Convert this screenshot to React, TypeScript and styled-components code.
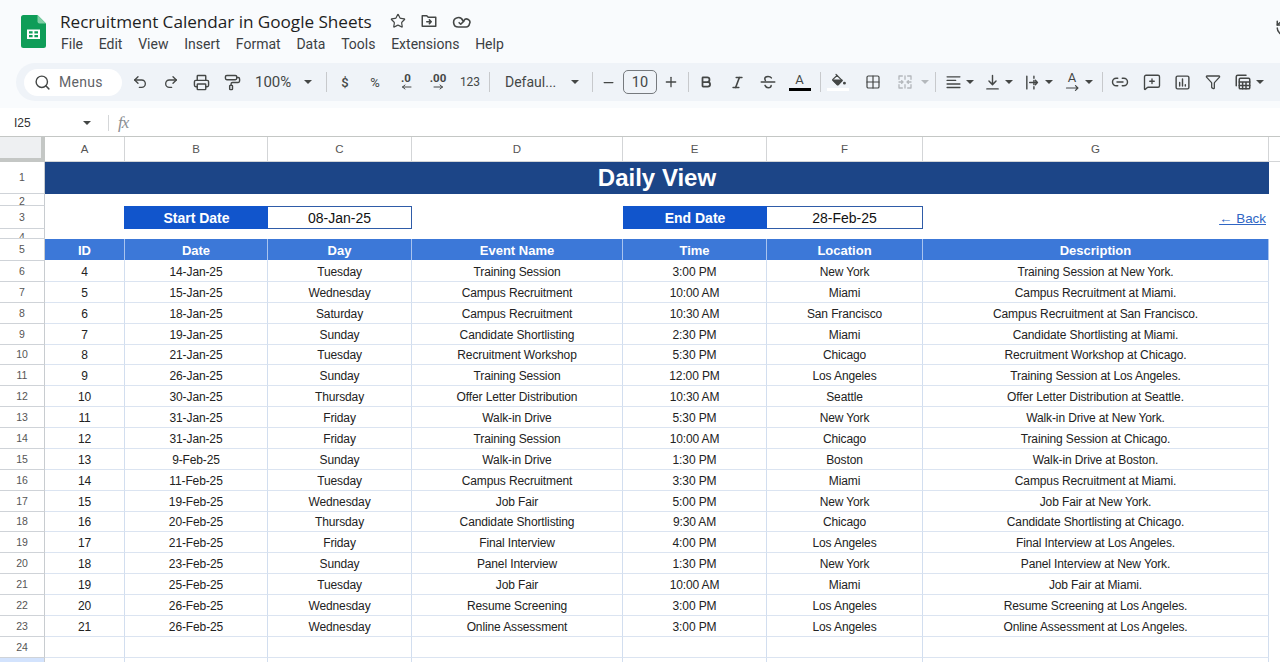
import React from "react";
import styled, { createGlobalStyle } from "styled-components";
import { Search, Undo2, Redo2, Printer, PaintRoller, Star, Minus, Plus, Grid2x2, Link2, MessageSquarePlus, Funnel, Italic, Bold } from "lucide-react";

const Global = createGlobalStyle`
  html, body { margin: 0; padding: 0; background: #fff; height: 662px; overflow: hidden; }
  * { box-sizing: border-box; }
  #root { width: 1280px; height: 662px; overflow: hidden; font-family: "Liberation Sans", Arial, sans-serif; }
`;

const Chrome = styled.div`background: #f9fbfd; height: 108px; display: flex; flex-direction: column;`;
const Header = styled.div`height: 63px; display: flex; padding: 15px 0 0 21px; position: relative; overflow: hidden;`;
const Logo = styled.svg`width: 25px; height: 33px; flex: none;`;
const TitleBlock = styled.div`margin-left: 14px; margin-top: -5px; display: flex; flex-direction: column; flex: 1;`;
const TitleRow = styled.div`display: flex; align-items: center; height: 22px;`;
const Title = styled.span`font-family: "Open Sans", Roboto, sans-serif; font-size: 17.2px; color: #1f1f1f; white-space: nowrap; width: 312px; letter-spacing: -0.05px;`;
const TitleIcon = styled.span<{ $ml: number }>`margin-left: ${p => p.$ml}px; display: flex; color: #444746;`;
const Menu = styled.div`display: flex; margin-top: 4px; margin-left: 1px; gap: 15.75px;`;
const MenuItem = styled.span`font-family: Roboto, sans-serif; font-size: 14px; color: #3c4043;`;
const HistoryMark = styled.span`position: absolute; right: -13px; top: 19px; display: flex; color: #444746;`;

const Toolbar = styled.div`margin-left: 16px; height: 38px; background: #eff3f8; border-radius: 19px 0 0 19px; display: flex; align-items: center; padding-left: 8px;`;
const SearchPill = styled.div`width: 98px; height: 27px; background: #fff; border-radius: 14px; display: flex; align-items: center; padding-left: 10px; margin-right: 2px; color: #444746;`;
const PillLabel = styled.span`font-family: Roboto, sans-serif; font-size: 14px; margin-left: 8px; color: #5f6368; letter-spacing: .3px;`;
const Slot = styled.div<{ $w: number; $faded?: boolean }>`width: ${p => p.$w}px; flex: none; height: 100%; display: flex; align-items: center; justify-content: center; color: ${p => p.$faded ? "#b4b8bc" : "#444746"};`;
const Sep = styled.div<{ $w: number }>`width: ${p => p.$w}px; flex: none; display: flex; justify-content: center; &::after { content: ""; width: 1px; height: 20px; background: #c7c9cc; }`;
const ToolText = styled.span<{ $size?: number; $weight?: number; $pad?: number }>`font-family: Roboto, sans-serif; font-size: ${p => p.$size ?? 14}px; font-weight: ${p => p.$weight ?? 400}; color: #444746; padding-left: ${p => p.$pad ?? 0}px; width: 100%; text-align: ${p => p.$pad ? "left" : "center"}; white-space: nowrap;`;
const DecBox = styled.span`display: flex; flex-direction: column; align-items: center; font-family: Roboto, sans-serif; font-size: 11.5px; font-weight: 700; line-height: 11px; color: #444746; margin-top: -2px;`;
const FontBox = styled.div`width: 34px; height: 24px; border: 1px solid #767a7e; border-radius: 5px; display: flex; align-items: center; justify-content: center; font-family: Roboto, sans-serif; font-size: 14.5px; color: #444746;`;
const ColorTool = styled.div<{ $bar: string }>`display: flex; flex-direction: column; align-items: center; width: 22px; color: #444746; &::after { content: ""; width: 22px; height: 3px; background: ${p => p.$bar}; margin-top: 1px; }`;
const ToolLetter = styled.span`font-family: Roboto, sans-serif; font-size: 13px; line-height: 14px; color: #444746;`;
const RotateStack = styled.span`display: flex; flex-direction: column; align-items: center; margin-top: -2px;`;
const Group = styled.div<{ $ml?: number }>`width: 39px; flex: none; height: 100%; display: flex; align-items: center; gap: 3px; margin-left: ${p => p.$ml ?? 0}px; color: #444746;`;
const IconBox = styled.span`width: 20px; display: flex; justify-content: center;`;
const CaretShape = styled.span<{ $faded?: boolean }>`width: 0; height: 0; flex: none; border-left: 4px solid transparent; border-right: 4px solid transparent; border-top: 4px solid ${p => p.$faded ? "#b4b8bc" : "#444746"};`;

const FormulaBar = styled.div`height: 29px; background: #fff; border-bottom: 1px solid #c4c7c5; display: flex; align-items: center; padding: 1px 0 0 14px;`;
const CellName = styled.span`font-size: 12px; color: #333; width: 69px;`;
const FxSep = styled.span`width: 1px; height: 16px; background: #d5d7d9; margin-left: 17px; margin-right: 9px;`;
const Fx = styled.span`font-family: "Liberation Serif", serif; font-style: italic; font-size: 17px; color: #8a8e92; letter-spacing: -1px;`;

const COLS = "45px 80px 143px 144px 211px 144px 156px 346px 11px";
const Row = styled.div<{ $h: number }>`display: grid; grid-template-columns: ${COLS}; height: ${p => p.$h}px;`;
const Corner = styled.div`background: #eef0f2; border-right: 4px solid #c4c7c5; border-bottom: 4px solid #c4c7c5;`;
const ColHead = styled.div<{ $tail?: boolean }>`display: flex; align-items: center; justify-content: center; font-size: 11.5px; color: #555; border-right: ${p => p.$tail ? "none" : "1px solid #d3d5d7"}; border-bottom: 1px solid #d3d5d7;`;
const RowHead = styled.div<{ $active?: boolean; $alignTop?: number }>`display: flex; align-items: ${p => p.$alignTop !== undefined ? "flex-start" : "center"}; padding-top: ${p => p.$alignTop ?? 0}px; line-height: 11px; justify-content: center; overflow: hidden; font-size: 10.5px; color: #555; background: ${p => p.$active ? "#d3e3fd" : "#fff"}; border-right: 1px solid #c8ccd0; border-bottom: 1px solid #cfd3d8;`;
const DataRowHead = styled(RowHead)`padding-top: 1px;`;
const Banner = styled.div`grid-column: span 7; background: #1c4587; color: #fff; font-weight: 700; font-size: 24px; display: flex; align-items: center; justify-content: center;`;
const Blank = styled.div<{ $span?: number }>`grid-column: span ${p => p.$span ?? 1}; background: #fff;`;
const DateLabel = styled.div<{ $bleed?: boolean }>`background: #1155cc; box-shadow: ${p => p.$bleed ? "-1px 0 0 #1155cc" : "none"}; color: #fff; font-weight: 700; font-size: 14px; display: flex; align-items: center; justify-content: center;`;
const DateValue = styled.div`background: #fff; border: 1px solid #2f5ca8; border-left: none; font-size: 14px; color: #111; display: flex; align-items: center; justify-content: center;`;
const BackCell = styled.div`display: flex; justify-content: flex-end; align-items: flex-end; padding: 0 3px 0 0;`;
const BackLink = styled.a`font-size: 13.4px; color: #2f66c4; text-decoration: underline; line-height: 20px;`;
const HeadCell = styled.div`background: #3c78d8; color: #fff; font-weight: 700; font-size: 13px; display: flex; align-items: center; justify-content: center; border-right: 1px solid #a9c4ef; border-bottom: 1px solid #fff; padding-top: 1px;`;
const Cell = styled.div`background: #fff; color: #222; font-size: 12px; letter-spacing: -0.12px; padding-top: 2px; display: flex; align-items: center; justify-content: center; white-space: nowrap; border-right: 1px solid #d2deef; border-bottom: 1px solid #dbe4f1;`;
const Tail = styled.div`background: #fff;`;

const Ic = ({ children, w = 18, h = 18, vb = "0 0 24 24" }: { children: React.ReactNode; w?: number; h?: number; vb?: string }) => (
  <svg width={w} height={h} viewBox={vb} fill="none" stroke="currentColor" strokeWidth="2" strokeLinecap="round" strokeLinejoin="round">{children}</svg>
);

const rows: string[][] = [
  ["4","14-Jan-25","Tuesday","Training Session","3:00 PM","New York","Training Session at New York."],
  ["5","15-Jan-25","Wednesday","Campus Recruitment","10:00 AM","Miami","Campus Recruitment at Miami."],
  ["6","18-Jan-25","Saturday","Campus Recruitment","10:30 AM","San Francisco","Campus Recruitment at San Francisco."],
  ["7","19-Jan-25","Sunday","Candidate Shortlisting","2:30 PM","Miami","Candidate Shortlisting at Miami."],
  ["8","21-Jan-25","Tuesday","Recruitment Workshop","5:30 PM","Chicago","Recruitment Workshop at Chicago."],
  ["9","26-Jan-25","Sunday","Training Session","12:00 PM","Los Angeles","Training Session at Los Angeles."],
  ["10","30-Jan-25","Thursday","Offer Letter Distribution","10:30 AM","Seattle","Offer Letter Distribution at Seattle."],
  ["11","31-Jan-25","Friday","Walk-in Drive","5:30 PM","New York","Walk-in Drive at New York."],
  ["12","31-Jan-25","Friday","Training Session","10:00 AM","Chicago","Training Session at Chicago."],
  ["13","9-Feb-25","Sunday","Walk-in Drive","1:30 PM","Boston","Walk-in Drive at Boston."],
  ["14","11-Feb-25","Tuesday","Campus Recruitment","3:30 PM","Miami","Campus Recruitment at Miami."],
  ["15","19-Feb-25","Wednesday","Job Fair","5:00 PM","New York","Job Fair at New York."],
  ["16","20-Feb-25","Thursday","Candidate Shortlisting","9:30 AM","Chicago","Candidate Shortlisting at Chicago."],
  ["17","21-Feb-25","Friday","Final Interview","4:00 PM","Los Angeles","Final Interview at Los Angeles."],
  ["18","23-Feb-25","Sunday","Panel Interview","1:30 PM","New York","Panel Interview at New York."],
  ["19","25-Feb-25","Tuesday","Job Fair","10:00 AM","Miami","Job Fair at Miami."],
  ["20","26-Feb-25","Wednesday","Resume Screening","3:00 PM","Los Angeles","Resume Screening at Los Angeles."],
  ["21","26-Feb-25","Wednesday","Online Assessment","3:00 PM","Los Angeles","Online Assessment at Los Angeles."],
];
const headers = ["ID","Date","Day","Event Name","Time","Location","Description"];
const RH = 20.88;

export default function App() {
  return (
    <>
      <Global />
      <Chrome>
        <Header>
          <Logo viewBox="0 0 25 33">
            <path d="M2.5 0H16.5L25 8.5V30.5A2.5 2.5 0 0 1 22.5 33H2.5A2.5 2.5 0 0 1 0 30.5V2.5A2.5 2.5 0 0 1 2.5 0Z" fill="#0f9d58" />
            <path d="M16.5 0L25 8.5H18.5A2 2 0 0 1 16.5 6.5Z" fill="#7fcfa4" />
            <path d="M6 14.5H19V24H6ZM8 16.3V18.4H11.6V16.3ZM13.4 16.3V18.4H17V16.3ZM8 20.1V22.2H11.6V20.1ZM13.4 20.1V22.2H17V20.1Z" fill="#fff" fillRule="evenodd" />
          </Logo>
          <TitleBlock>
            <TitleRow>
              <Title>Recruitment Calendar in Google Sheets</Title>
              <TitleIcon $ml={18}><Star size={16} strokeWidth={1.8} /></TitleIcon>
              <TitleIcon $ml={14}>
                <Ic w={18} h={18}><path d="M3 19V5h6l2 2h10v12Z" /><path d="M9 13h6m-2.500-2.500L15 13l-2.500 2.500" /></Ic>
              </TitleIcon>
              <TitleIcon $ml={14}>
                <Ic w={19} h={19}><path d="M17.500 19H8a6 6 0 1 1 5.700-8h1.300a4 4 0 0 1 7 4 4.200 4.200 0 0 1-4.500 4Z" /><path d="m9 13.500 2 2 4-4" /></Ic>
              </TitleIcon>
            </TitleRow>
            <Menu>
              {["File","Edit","View","Insert","Format","Data","Tools","Extensions","Help"].map(m => <MenuItem key={m}>{m}</MenuItem>)}
            </Menu>
          </TitleBlock>
          <HistoryMark>
            <Ic w={18} h={18}><path d="M3 12a9 9 0 1 0 3-6.700L3 8" /><path d="M3 3v5h5" /><path d="M12 7v5l4 2" /></Ic>
          </HistoryMark>
        </Header>
        <Toolbar>
          <SearchPill><Search size={17} strokeWidth={2} /><PillLabel>Menus</PillLabel></SearchPill>
          <Slot $w={31}><Undo2 size={16} strokeWidth={2} /></Slot>
          <Slot $w={31}><Redo2 size={16} strokeWidth={2} /></Slot>
          <Slot $w={31}><Printer size={17} strokeWidth={2} /></Slot>
          <Slot $w={31}><PaintRoller size={17} strokeWidth={2} /></Slot>
          <Slot $w={50}><ToolText $size={15} $pad={7}>100%</ToolText></Slot>
          <Slot $w={20}><CaretShape /></Slot>
          <Sep $w={16} />
          <Slot $w={22}><ToolText $size={13} $weight={500}>$</ToolText></Slot>
          <Slot $w={38}><ToolText $size={13}>%</ToolText></Slot>
          <Slot $w={24}>
            <DecBox>.0<Ic w={11} h={6} vb="0 0 22 12"><path d="M20 6H3m5-4-5 4 5 4" /></Ic></DecBox>
          </Slot>
          <Slot $w={40}>
            <DecBox>.00<Ic w={11} h={6} vb="0 0 22 12"><path d="M2 6h17m-5-4 5 4-5 4" /></Ic></DecBox>
          </Slot>
          <Slot $w={24}><ToolText $size={12}>123</ToolText></Slot>
          <Sep $w={14} />
          <Slot $w={66}><ToolText $size={14} $pad={9}>Defaul...</ToolText></Slot>
          <Slot $w={26}><CaretShape /></Slot>
          <Sep $w={8} />
          <Slot $w={24}><Minus size={15} strokeWidth={2} /></Slot>
          <Slot $w={40}><FontBox>10</FontBox></Slot>
          <Slot $w={22}><Plus size={16} strokeWidth={2} /></Slot>
          <Sep $w={12} />
          <Slot $w={24}><Bold size={14} strokeWidth={3} /></Slot>
          <Slot $w={38}><Italic size={15} strokeWidth={2.6} /></Slot>
          <Slot $w={24}>
            <Ic w={18} h={18}><path d="M3 12h18" /><path d="M16.500 6.500C15.500 5 14 4.500 12 4.500c-2.500 0-4.300 1.200-4.300 3.300 0 .8.3 1.500.8 2" /><path d="M8 16.500c.8 2 2.200 3 4.200 3 2.300 0 4-1.200 4-3" /></Ic>
          </Slot>
          <Slot $w={39}><ColorTool $bar="#000"><ToolLetter>A</ToolLetter></ColorTool></Slot>
          <Sep $w={2} />
          <Slot $w={34}>
            <ColorTool $bar="#fff">
              <Ic w={15} h={14} vb="0 0 24 22"><path d="M8 2l10 10-6.500 6.500a1 1 0 0 1-1.400 0L3 11.400a1 1 0 0 1 0-1.400L10 3.500" /><path d="M3.500 11h14L11.500 18a1 1 0 0 1-1.400 0Z" fill="currentColor" /><circle cx="21.500" cy="16" r="1.300" fill="currentColor" /></Ic>
            </ColorTool>
          </Slot>
          <Slot $w={36}><Grid2x2 size={16} strokeWidth={1.8} /></Slot>
          <Slot $w={28} $faded>
            <Ic w={16} h={16}><path d="M3 8V3h5M16 3h5v5M3 16v5h5M21 16v5h-5M3 12h6m-2-2 2 2-2 2M21 12h-6m2-2-2 2 2 2M12 3v5M12 16v5" /></Ic>
          </Slot>
          <Slot $w={12}><CaretShape $faded /></Slot>
          <Sep $w={8} />
          <Group $ml={4}>
            <IconBox><Ic w={17} h={17}><path d="M3 4h18M3 9h12M3 14h18M3 19h18" /></Ic></IconBox><CaretShape />
          </Group>
          <Group>
            <IconBox><Ic w={17} h={17}><path d="M12 2v13m-5-5 5 5 5-5" /><path d="M4 21h16" /></Ic></IconBox><CaretShape />
          </Group>
          <Group $ml={1}>
            <IconBox><Ic w={17} h={17}><path d="M4 3v18M14 3v3M14 18v3M14 9v6" /><path d="M8 12h11m-3-3 3 3-3 3" /></Ic></IconBox><CaretShape />
          </Group>
          <Group $ml={1}>
            <IconBox>
              <RotateStack>
                <ToolLetter>A</ToolLetter>
                <Ic w={15} h={6} vb="0 0 24 10"><path d="M2 5h19m-4-4 4 4-4 4" /></Ic>
              </RotateStack>
            </IconBox>
            <CaretShape />
          </Group>
          <Sep $w={2} />
          <Slot $w={34}><Link2 size={18} strokeWidth={1.9} /></Slot>
          <Slot $w={30}><MessageSquarePlus size={18} strokeWidth={1.8} /></Slot>
          <Slot $w={30}>
            <Ic w={17} h={17}><rect x="3" y="3" width="18" height="18" rx="2" /><path d="M8 17v-5M12 17V7M16 17v-2" /></Ic>
          </Slot>
          <Slot $w={32}><Funnel size={16} strokeWidth={1.9} /></Slot>
          <Group $ml={4}>
            <IconBox>
              <Ic w={18} h={18}><path d="M3 17V5a2 2 0 0 1 2-2h11" /><rect x="7" y="7" width="14" height="14" rx="1.500" /><path d="M7 12h14M7 16.500h14M11.500 12v9M16 12v9" /></Ic>
            </IconBox>
            <CaretShape />
          </Group>
        </Toolbar>
      </Chrome>
      <FormulaBar>
        <CellName>I25</CellName>
        <CaretShape />
        <FxSep />
        <Fx>fx</Fx>
      </FormulaBar>
      <Row $h={25}>
        <Corner />
        {["A","B","C","D","E","F","G"].map(c => <ColHead key={c}>{c}</ColHead>)}
        <ColHead $tail />
      </Row>
      <Row $h={32}><RowHead>1</RowHead><Banner>Daily View</Banner><Tail /></Row>
      <Row $h={12}><RowHead $alignTop={2}>2</RowHead><Blank $span={7} /><Tail /></Row>
      <Row $h={23}>
        <RowHead>3</RowHead>
        <Blank />
        <DateLabel $bleed>Start Date</DateLabel>
        <DateValue>08-Jan-25</DateValue>
        <Blank />
        <DateLabel>End Date</DateLabel>
        <DateValue>28-Feb-25</DateValue>
        <BackCell><BackLink href="#">← Back</BackLink></BackCell>
        <Tail />
      </Row>
      <Row $h={10}><RowHead $alignTop={3}>4</RowHead><Blank $span={7} /><Tail /></Row>
      <Row $h={22}>
        <RowHead>5</RowHead>
        {headers.map(h => <HeadCell key={h}>{h}</HeadCell>)}
        <Tail />
      </Row>
      {rows.map((r, i) => (
        <Row $h={RH} key={r[0]}>
          <DataRowHead>{i + 6}</DataRowHead>
          {r.map((c, j) => <Cell key={j}>{c}</Cell>)}
          <Tail />
        </Row>
      ))}
      <Row $h={RH}>
        <DataRowHead>24</DataRowHead>
        {headers.map(h => <Cell key={h} />)}
        <Tail />
      </Row>
      <Row $h={RH}>
        <RowHead $active />
        {headers.map(h => <Cell key={h} />)}
        <Tail />
      </Row>
    </>
  );
}
